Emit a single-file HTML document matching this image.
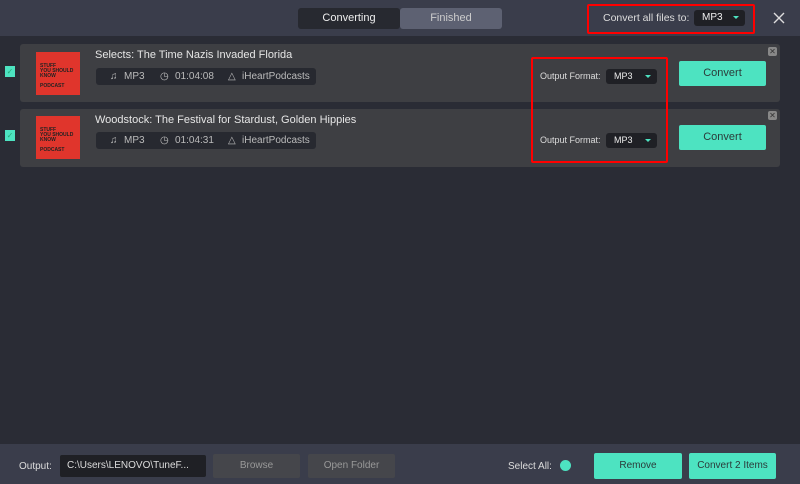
<!DOCTYPE html><html><head><style>
*{margin:0;padding:0;box-sizing:border-box}
body{width:800px;height:484px;background:#2a2c35;font-family:"Liberation Sans",sans-serif;position:relative;overflow:hidden;color:#ddd}
.a{position:absolute}
.hdr{left:0;top:0;width:800px;height:36px;background:#3a3d4b}
.tab{top:8px;height:21px;font-size:11px;text-align:center;line-height:21px;border-radius:3px}
.card{left:20px;width:760px;height:58px;background:#3e3f43;border-radius:3px}
.chk{left:5px;width:10px;height:11px;background:#4de3c1;color:#2a7;font-size:8px;line-height:11px;text-align:center}
.thumb{width:44px;height:43px;background:#e0352c;color:#222;font-size:5px;font-weight:bold;padding:12px 0 0 4px;line-height:5px}
.title{font-size:11px;color:#e6e6e6}
.pill{width:220px;height:17px;background:#272930;border-radius:3px;font-size:10px;color:#bbb;line-height:17px}
.pill span{position:absolute}
.of{font-size:9px;color:#ddd}
.dd{width:51px;height:15px;background:#1f2025;border-radius:3px;font-size:9px;color:#eee;line-height:15px;padding-left:8px}
.dd i{position:absolute;right:6px;top:6px;border-left:3px solid transparent;border-right:3px solid transparent;border-top:3px solid #4de3c1}
.btn{background:#4de3c1;color:#2b3b3a;font-size:11px;text-align:center;border-radius:2px}
.x{width:9px;height:9px;background:#888;border-radius:2px;color:#333;font-size:8px;line-height:9px;text-align:center}
.red{border:2px solid #f00;border-radius:2px}
.gb{background:#45464b;color:#999;font-size:10px;text-align:center;line-height:24px;border-radius:2px}
</style></head><body>
<div class="a hdr"></div>
<div class="a tab" style="left:298px;width:102px;background:#272930;color:#eee">Converting</div>
<div class="a tab" style="left:400px;width:102px;background:#5d6172;color:#ccc">Finished</div>
<div class="a" style="left:603px;top:12px;font-size:10.5px;color:#ddd">Convert all files to:</div>
<div class="a dd" style="left:694px;top:10px;width:51px;height:16px;font-size:10px;line-height:16px;background:#1f2025">MP3<i></i></div>
<div class="a red" style="left:587px;top:4px;width:168px;height:30px"></div>
<svg class="a" style="left:773px;top:12px" width="12" height="12"><path d="M1 1L11 11M11 1L1 11" stroke="#ddd" stroke-width="1.4"/></svg>

<div class="a card" style="top:44px"></div>
<div class="a card" style="top:109px"></div>
<div class="a chk" style="top:66px">✓</div>
<div class="a chk" style="top:130px">✓</div>
<div class="a thumb" style="left:36px;top:52px">STUFF<br>YOU SHOULD<br>KNOW<br><br>PODCAST</div>
<div class="a thumb" style="left:36px;top:116px">STUFF<br>YOU SHOULD<br>KNOW<br><br>PODCAST</div>
<div class="a title" style="left:95px;top:49px">Selects: The Time Nazis Invaded Florida</div>
<div class="a title" style="left:95px;top:114px">Woodstock: The Festival for Stardust, Golden Hippies</div>
<div class="a pill" style="left:96px;top:68px"><span style="left:14px">♫</span><span style="left:28px">MP3</span><span style="left:64px">◷</span><span style="left:79px">01:04:08</span><span style="left:132px">△</span><span style="left:146px">iHeartPodcasts</span></div>
<div class="a pill" style="left:96px;top:132px"><span style="left:14px">♫</span><span style="left:28px">MP3</span><span style="left:64px">◷</span><span style="left:79px">01:04:31</span><span style="left:132px">△</span><span style="left:146px">iHeartPodcasts</span></div>
<div class="a of" style="left:540px;top:71px">Output Format:</div>
<div class="a of" style="left:540px;top:135px">Output Format:</div>
<div class="a dd" style="left:606px;top:69px">MP3<i></i></div>
<div class="a dd" style="left:606px;top:133px">MP3<i></i></div>
<div class="a red" style="left:531px;top:57px;width:137px;height:106px"></div>
<div class="a btn" style="left:679px;top:61px;width:87px;height:25px;line-height:25px">Convert</div>
<div class="a btn" style="left:679px;top:125px;width:87px;height:25px;line-height:25px">Convert</div>
<div class="a x" style="left:768px;top:47px">✕</div>
<div class="a x" style="left:768px;top:111px">✕</div>

<div class="a" style="left:0;top:444px;width:800px;height:40px;background:#3a3d4b"></div>
<div class="a" style="left:19px;top:461px;font-size:10px;color:#ddd">Output:</div>
<div class="a" style="left:60px;top:455px;width:146px;height:22px;background:#1f2025;border-radius:2px;font-size:10px;color:#ddd;line-height:22px;padding-left:7px">C:\Users\LENOVO\TuneF...</div>
<div class="a gb" style="left:213px;top:454px;width:87px;height:24px">Browse</div>
<div class="a gb" style="left:308px;top:454px;width:87px;height:24px">Open Folder</div>
<div class="a" style="left:508px;top:461px;font-size:10px;color:#ddd">Select All:</div>
<div class="a" style="left:560px;top:460px;width:11px;height:11px;border-radius:50%;background:#4de3c1"></div>
<div class="a btn" style="left:594px;top:453px;width:88px;height:26px;line-height:26px;font-size:10px">Remove</div>
<div class="a btn" style="left:689px;top:453px;width:87px;height:26px;line-height:26px;font-size:10px">Convert 2 Items</div>
</body></html>
